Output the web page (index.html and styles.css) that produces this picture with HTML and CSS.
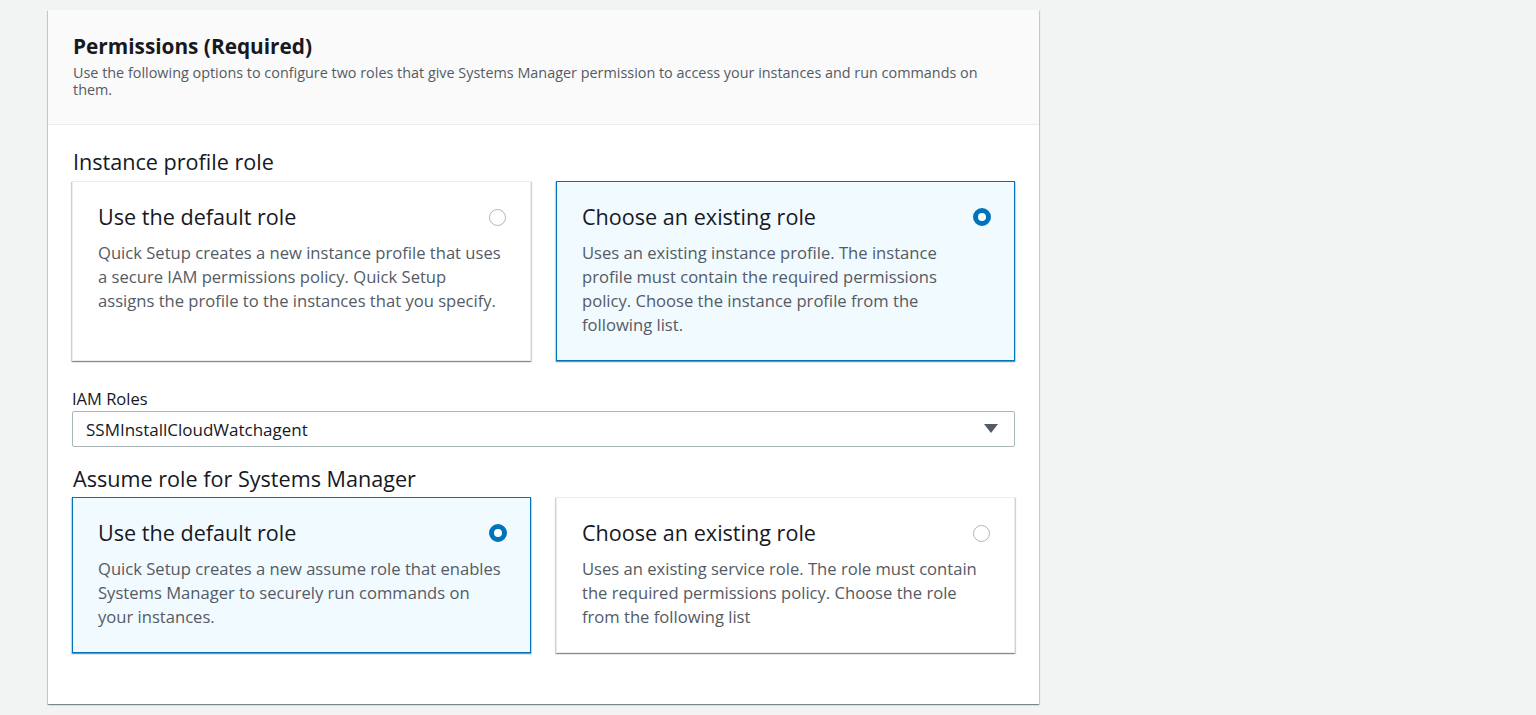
FILE: index.html
```html
<!DOCTYPE html>
<html lang="en">
<head>
<meta charset="utf-8">
<title>Permissions (Required)</title>
<link rel="stylesheet" href="styles.css">
</head>
<body>
<div class="panel">
  <div class="panel-header">
    <h2 class="panel-title">Permissions (Required)</h2>
    <p class="panel-desc">Use the following options to configure two roles that give Systems Manager permission to access your instances and run commands on them.</p>
  </div>
  <div class="panel-body">
    <h3 class="section-title">Instance profile role</h3>
    <div class="tiles">
      <div class="tile">
        <div class="tile-head">
          <span class="tile-title">Use the default role</span>
          <span class="radio"></span>
        </div>
        <p class="tile-desc">Quick Setup creates a new instance profile that uses a secure IAM permissions policy. Quick Setup assigns the profile to the instances that you specify.</p>
      </div>
      <div class="tile selected">
        <div class="tile-head">
          <span class="tile-title">Choose an existing role</span>
          <span class="radio checked"></span>
        </div>
        <p class="tile-desc">Uses an existing instance profile. The instance profile must contain the required permissions policy. Choose the instance profile from the following list.</p>
      </div>
    </div>

    <div class="field">
      <label class="field-label">IAM Roles</label>
      <div class="select">
        <span class="select-value">SSMInstallCloudWatchagent</span>
        <svg class="caret" width="14" height="10" viewBox="0 0 14 10"><path d="M0 0 H14 L7 9 Z" fill="#545b64"/></svg>
      </div>
    </div>

    <h3 class="section-title second">Assume role for Systems Manager</h3>
    <div class="tiles">
      <div class="tile selected">
        <div class="tile-head">
          <span class="tile-title">Use the default role</span>
          <span class="radio checked"></span>
        </div>
        <p class="tile-desc">Quick Setup creates a new assume role that enables Systems Manager to securely run commands on your instances.</p>
      </div>
      <div class="tile">
        <div class="tile-head">
          <span class="tile-title">Choose an existing role</span>
          <span class="radio"></span>
        </div>
        <p class="tile-desc">Uses an existing service role. The role must contain the required permissions policy. Choose the role from the following list</p>
      </div>
    </div>
  </div>
</div>
</body>
</html>
```

FILE: styles.css
```css
* { box-sizing: border-box; }

html, body {
  margin: 0;
  padding: 0;
}

body {
  background: #f2f3f3;
  font-family: "Open Sans", "Liberation Sans", sans-serif;
  color: #16191f;
  padding: 10px 0 0 48px;
  height: 715px;
  overflow: hidden;
}

.panel {
  width: 991px;
  background: #ffffff;
  box-shadow: 0 1px 1px 0 rgba(0, 28, 36, 0.3), 1px 1px 1px 0 rgba(0, 28, 36, 0.15), -1px 1px 1px 0 rgba(0, 28, 36, 0.15);
}

.panel-header {
  background: #fafafa;
  border-bottom: 1px solid #eaeded;
  padding: 24px 24px 26px 25px;
}

.panel-title {
  margin: 0;
  font-size: 20.8px;
  line-height: 24px;
  font-weight: 700;
  color: #16191f;
}

.panel-desc {
  margin: 6px 0 0;
  font-size: 14.4px;
  line-height: 17px;
  color: #545b64;
  max-width: 930px;
}

.panel-body {
  padding: 23px 24px 51px 24px;
}

.section-title {
  margin: 0 0 5px 1px;
  font-size: 21.6px;
  line-height: 28px;
  font-weight: 400;
  color: #16191f;
}

.section-title.second {
  margin-top: 18px;
  margin-bottom: 4px;
}

.tiles {
  display: grid;
  grid-template-columns: 1fr 1fr;
  column-gap: 25px;
}

.tile {
  background: #ffffff;
  border: 1px solid #eaeded;
  box-shadow: 0 1px 1px 0 rgba(0, 28, 36, 0.3), 1px 1px 1px 0 rgba(0, 28, 36, 0.15), -1px 1px 1px 0 rgba(0, 28, 36, 0.15);
  padding: 21px 24px 23px 25px;
}

.tile.selected {
  background: #f1faff;
  border-color: #0073bb;
}

.tile-head {
  display: flex;
  align-items: center;
  justify-content: space-between;
}

.tile-title {
  font-size: 21.6px;
  line-height: 28px;
  color: #16191f;
}

.radio {
  width: 17px;
  height: 17px;
  border-radius: 50%;
  border: 1.5px solid #aab7b8;
  background: #ffffff;
  flex: none;
}

.radio.checked {
  width: 18px;
  height: 18px;
  margin-right: -0.5px;
  border: 5.5px solid #0073bb;
}

.tile-desc {
  margin: 10px 0 0;
  font-size: 16.6px;
  line-height: 24px;
  color: #545b64;
}

.field {
  margin-top: 28px;
}

.field-label {
  display: block;
  font-size: 16.5px;
  line-height: 20px;
  color: #16191f;
  margin-bottom: 2px;
}

.select {
  height: 36px;
  border: 1px solid #aab7b8;
  border-radius: 2px;
  background: #ffffff;
  display: flex;
  align-items: center;
  justify-content: space-between;
  padding: 0 16px 0 13px;
}

.select-value {
  font-size: 17px;
  color: #16191f;
}

.caret {
  display: block;
}
```
